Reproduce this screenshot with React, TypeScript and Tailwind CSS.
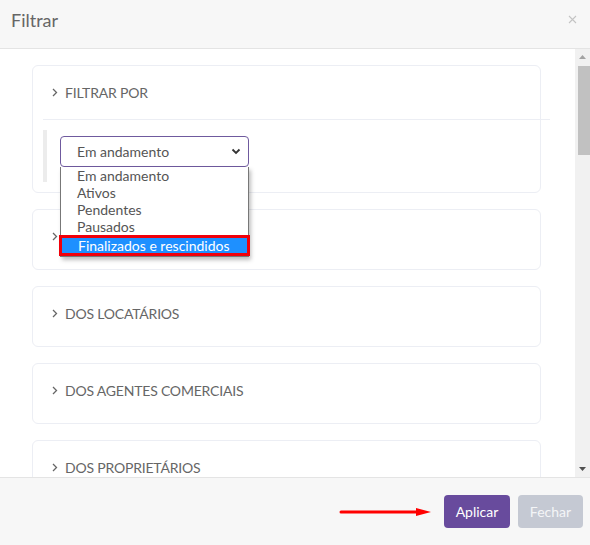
import React from "react";

const font = { fontFamily: "Lato, 'Open Sans', sans-serif" };

const Chevron = () => (
  <svg width="6" height="9" viewBox="0 0 6 9" className="mr-[7px] shrink-0">
    <polyline points="1,1 4.5,4.5 1,8" fill="none" stroke="#666" strokeWidth="1.3" />
  </svg>
);

const Section = ({ title }: { title: string }) => (
  <div className="h-[61px] rounded-[6px] border border-[#eceef4] bg-white flex items-center pl-[19px] pb-[6px] shrink-0">
    <Chevron />
    <span className="text-[14px] text-[#666] tracking-[-0.2px]">{title}</span>
  </div>
);

const options = [
  "Em andamento",
  "Ativos",
  "Pendentes",
  "Pausados",
  "Finalizados e rescindidos",
];

const App = () => {
  return (
    <div className="w-[590px] h-[545px] flex flex-col bg-white overflow-hidden" style={font}>
      {/* Header */}
      <div className="h-[49px] shrink-0 bg-[#f7f7f7] border-b border-[#e4e4e4] flex items-center justify-between pl-[11px] pr-[13px] pb-[7px]">
        <span className="text-[18px] text-[#666]">Filtrar</span>
        <svg width="9" height="9" viewBox="0 0 9 9" className="-mt-[2px]">
          <path d="M1 1 L8 8 M8 1 L1 8" stroke="#c4c4c4" strokeWidth="1.1" />
        </svg>
      </div>

      {/* Body */}
      <div className="flex-1 flex min-h-0">
        <div className="flex-1 overflow-hidden pt-[16px] pl-[32px] pr-[34px] flex flex-col gap-[16px]">
          {/* Filtrar por */}
          <div className="rounded-[6px] border border-[#eceef4] bg-white shrink-0 pl-[10px] pb-[10px]">
            <div className="h-[53px] flex items-center pl-[9px]">
              <Chevron />
              <span className="text-[14px] text-[#666] tracking-[-0.2px]">FILTRAR POR</span>
            </div>
            <div className="h-px bg-[#eceef4] -mr-[10px]" />
            <div className="mt-[10px] h-[52px] border-l-[4px] border-[#ececec] pl-[13px] pt-[6px]">
              <div className="relative w-[189px]">
                <div className="h-[31px] rounded-[4px] border border-[#6f5a9e] flex items-center justify-between pl-[16px] pr-[7px]">
                  <span className="text-[14px] text-[#555]">Em andamento</span>
                  <svg width="10" height="7" viewBox="0 0 10 7">
                    <polyline points="1.5,1.5 5,5 8.5,1.5" fill="none" stroke="#333" strokeWidth="1.8" />
                  </svg>
                </div>
                {/* Open dropdown list */}
                <div className="absolute left-0 top-[31px] w-[189px] z-10 bg-white border border-[#777] border-t-0 shadow-[2px_3px_4px_rgba(0,0,0,0.25)] flex flex-col">
                  {options.map((o, i) =>
                    i === options.length - 1 ? (
                      <div
                        key={o}
                        className="h-[21px] -mx-[2px] border-[3px] border-[#f0000a] bg-[#1e90ff] text-white text-[14px] leading-[15px] pl-[16px]"
                      >
                        {o}
                      </div>
                    ) : (
                      <div key={o} className="h-[17px] text-[14px] leading-[17px] text-[#555] pl-[16px]">
                        {o}
                      </div>
                    )
                  )}
                </div>
              </div>
            </div>
          </div>

          <Section title="DOS CONTRATOS" />
          <Section title="DOS LOCATÁRIOS" />
          <Section title="DOS AGENTES COMERCIAIS" />
          <Section title="DOS PROPRIETÁRIOS" />
        </div>

        {/* Scrollbar */}
        <div className="w-[15px] shrink-0 bg-[#f1f1f1] flex flex-col items-center">
          <svg width="15" height="17" viewBox="0 0 15 17">
            <polygon points="4,10 11,10 7.5,6" fill="#a3a3a3" />
          </svg>
          <div className="w-[12px] ml-[3px] h-[89px] bg-[#c1c1c1]" />
          <div className="flex-1" />
          <svg width="15" height="17" viewBox="0 0 15 17">
            <polygon points="4,7 11,7 7.5,11" fill="#505050" />
          </svg>
        </div>
      </div>

      {/* Footer */}
      <div className="h-[68px] shrink-0 bg-[#f7f7f7] border-t border-[#e4e4e4] flex items-center justify-end pr-[7px] gap-[8px]">
        <svg width="94" height="12" viewBox="0 0 94 12" className="mr-[3px]">
          <line x1="2" y1="6" x2="80" y2="6" stroke="#f00" strokeWidth="3" strokeLinecap="round" />
          <polygon points="77,2 92,6 77,10" fill="#f00" />
        </svg>
        <button className="w-[66px] h-[33px] rounded-[4px] bg-[#684b9d] text-white text-[14px]">Aplicar</button>
        <button className="w-[65px] h-[33px] rounded-[4px] bg-[#c5c9d3] text-[#f4f5f7] text-[14px]">Fechar</button>
      </div>
    </div>
  );
};

export default App;
